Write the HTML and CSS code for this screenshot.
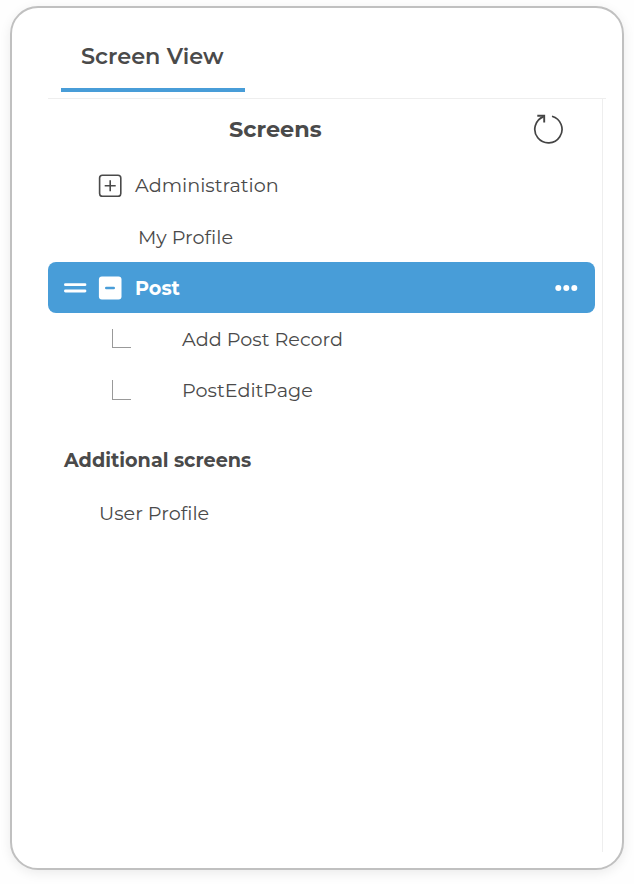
FILE: index.html
```html
<!DOCTYPE html>
<html lang="en">
<head>
<meta charset="utf-8">
<title>Screen View</title>
<link rel="stylesheet" href="styles.css">
</head>
<body>
<main class="card">
  <nav class="tabs"><div class="tab">Screen View</div></nav>
  <section class="panel">
    <header class="panel-head">
      <h2 class="title">Screens</h2>
      <svg class="refresh" width="32" height="32" viewBox="0 0 32 32" fill="none" stroke="#444" stroke-width="1.7"><path d="M20 3.2A13.6 13.6 0 1 1 11.6 3.6"/><path d="M5.3 2.7H12.2V9.4" stroke-width="1.9"/></svg>
    </header>
    <ul class="tree">
      <li class="row">
        <svg class="toggle" width="24" height="24" viewBox="0 0 24 24" fill="none" stroke="#4a4a4a" stroke-width="1.6"><rect x="1.6" y="2.2" width="21.2" height="21.2" rx="2.8"/><path d="M6.7 12.8h11M12.2 7.3v11"/></svg>
        <span class="label">Administration</span>
      </li>
      <li class="row leaf"><span class="label">My Profile</span></li>
      <li class="row selected">
        <svg class="handle" width="24" height="14" viewBox="0 0 24 14" stroke="#fff" stroke-width="2.8" stroke-linecap="round"><path d="M1.4 3.7H21M1.4 10H21"/></svg>
        <svg class="toggle" width="24" height="24" viewBox="0 0 24 24"><rect x=".9" y=".6" width="22.6" height="22.8" rx="3" fill="#fff"/><path d="M8.2 12h7.6" stroke="#489dd8" stroke-width="2.4" stroke-linecap="round"/></svg>
        <span class="label post">Post</span>
        <svg class="more" width="24" height="8" viewBox="0 0 24 8" fill="#fff"><circle cx="3.3" cy="4" r="3"/><circle cx="11.3" cy="4" r="3"/><circle cx="19.3" cy="4" r="3"/></svg>
      </li>
      <li class="row child"><i class="branch"></i><span class="label">Add Post Record</span></li>
      <li class="row child"><i class="branch last"></i><span class="label">PostEditPage</span></li>
    </ul>
    <h3 class="subtitle">Additional screens</h3>
    <p class="extra">User Profile</p>
  </section>
</main>
</body>
</html>
```
FILE: styles.css
```css
* { box-sizing: border-box; }
body {
  margin: 0;
  padding: 6px 10px 14px;
  height: 884px;
  background: #fefefe;
  color: #4a4a4a;
  font-family: Montserrat, Inter, sans-serif;
}
.card {
  height: 864px;
  padding: 0 16px 0 36px;
  border: 2px solid #c0c0c0;
  border-radius: 28px;
  background: #fff;
  box-shadow: 0 3px 12px rgba(0, 0, 0, .08);
}
.tabs { height: 91px; border-bottom: 1px solid #eee; }
.tab {
  width: 184px;
  height: 84px;
  margin-left: 13px;
  padding: 33px 0 0 20px;
  border-bottom: 4px solid #489dd8;
  font-size: 22.4px;
  font-weight: 600;
  line-height: 30px;
  white-space: nowrap;
}
.panel { width: 555px; height: 753px; border-right: 1px solid #eee; }
.panel-head { display: flex; align-items: center; height: 60px; padding-left: 181px; }
.title { width: 303px; margin: 0; font-size: 22.4px; font-weight: 700; }
.tree { margin: 0; padding: 0; list-style: none; font-size: 19.2px; }
.row { display: flex; align-items: center; width: 547px; height: 52px; padding-left: 50px; }
.toggle { margin-right: 13px; }
.label { white-space: nowrap; }
.leaf { height: 51px; padding-left: 90px; }
.selected { height: 51px; padding: 0 16px; border-radius: 8px; background: #489dd8; color: #fff; }
.handle { margin-right: 10px; }
.post { font-weight: 700; }
.more { margin-left: auto; }
.child { height: 51px; padding-left: 64px; }
.branch { width: 19px; height: 19px; margin-right: 51px; border: solid #999; border-width: 0 0 1px 1px; }
.last { height: 20px; }
.subtitle { margin: 32px 0 0 16px; font-size: 19.2px; line-height: 26px; font-weight: 700; }
.extra { margin: 27px 0 0 51px; font-size: 19.2px; line-height: 26px; }
```
